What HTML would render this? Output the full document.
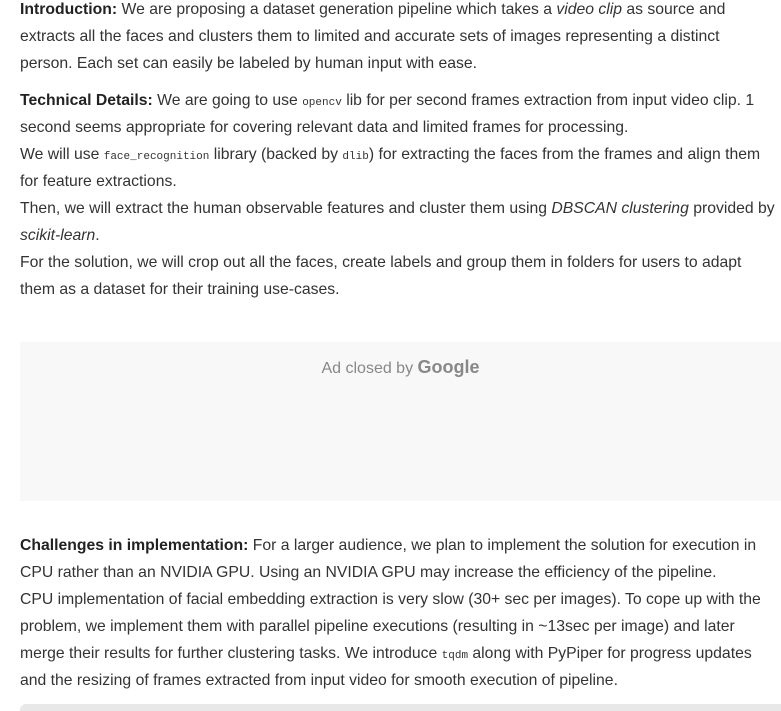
<!DOCTYPE html>
<html><head><meta charset="utf-8"><style>
html,body{margin:0;padding:0;background:#fff;width:781px;height:711px;overflow:hidden}
body{font-family:"Liberation Sans",Arial,sans-serif;font-size:15.75px;color:#333;position:relative}
p{position:absolute;left:20px;margin:0;line-height:27px;white-space:nowrap;letter-spacing:0}
b{font-weight:bold;color:#222}
code{font-family:"Liberation Mono",monospace;font-size:11px;color:#333;line-height:0}
.ad{position:absolute;left:20px;top:342px;width:761px;height:159px;background:#f8f8f8}
.ad span{position:absolute;top:15px;left:0;right:0;text-align:center;color:#888;font-size:16px}
.ad b{color:#888;font-size:18px}
.bar{position:absolute;left:20px;top:704px;width:770px;height:20px;background:#e8e8e8;border-radius:6px}
</style></head><body>
<p style="top:-4px"><b>Introduction:</b> We are proposing a dataset generation pipeline which takes a <i>video clip</i> as source and<br>extracts all the faces and clusters them to limited and accurate sets of images representing a distinct<br>person. Each set can easily be labeled by human input with ease.</p>
<p style="top:87px"><b>Technical Details:</b> We are going to use <code>opencv</code> lib for per second frames extraction from input video clip. 1<br>second seems appropriate for covering relevant data and limited frames for processing.<br>We will use <code>face_recognition</code> library (backed by <code>dlib</code>) for extracting the faces from the frames and align them<br>for feature extractions.<br>Then, we will extract the human observable features and cluster them using <i>DBSCAN clustering</i> provided by<br><i>scikit-learn</i>.<br>For the solution, we will crop out all the faces, create labels and group them in folders for users to adapt<br>them as a dataset for their training use-cases.</p>
<div class="ad"><span>Ad closed by <b>Google</b></span></div>
<p style="top:532px"><b>Challenges in implementation:</b> For a larger audience, we plan to implement the solution for execution in<br>CPU rather than an NVIDIA GPU. Using an NVIDIA GPU may increase the efficiency of the pipeline.<br>CPU implementation of facial embedding extraction is very slow (30+ sec per images). To cope up with the<br>problem, we implement them with parallel pipeline executions (resulting in ~13sec per image) and later<br>merge their results for further clustering tasks. We introduce <code>tqdm</code> along with PyPiper for progress updates<br>and the resizing of frames extracted from input video for smooth execution of pipeline.</p>
<div class="bar"></div>
</body></html>
